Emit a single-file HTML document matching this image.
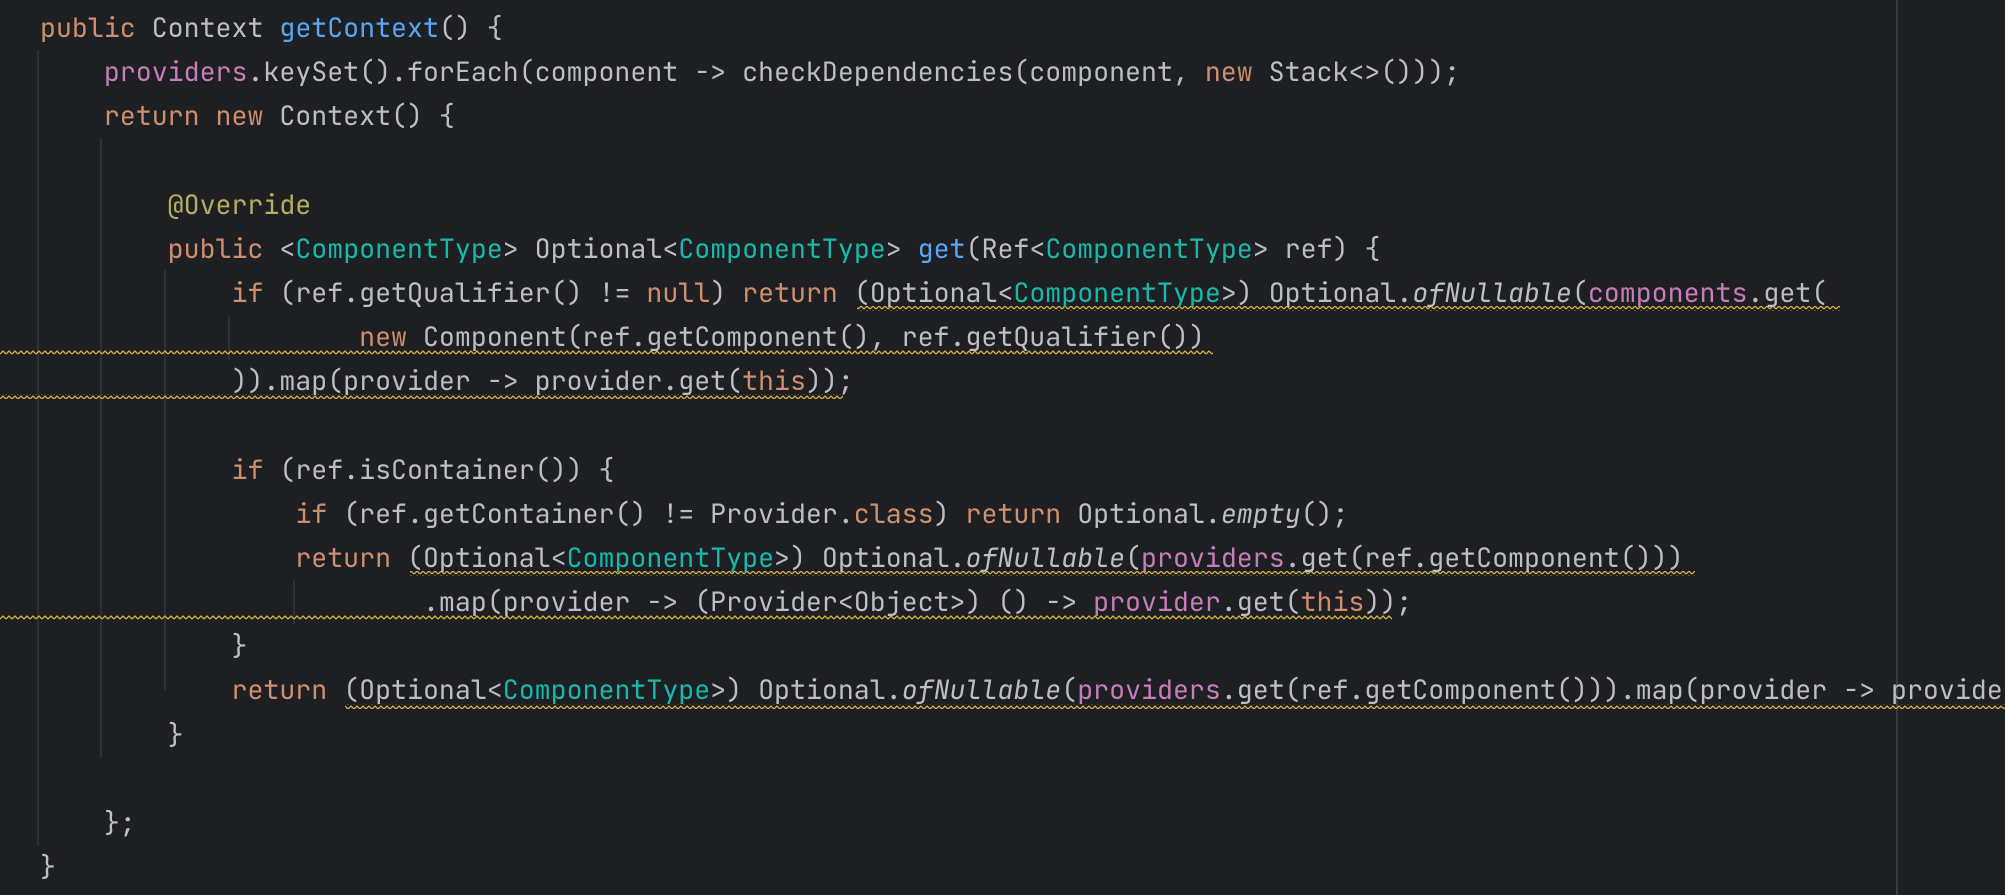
<!DOCTYPE html>
<html><head><meta charset="utf-8">
<style>
html,body{margin:0;padding:0;background:#1e1f22;width:2005px;height:895px;overflow:hidden;}
#code{position:absolute;left:40px;top:6px;width:1965px;overflow:hidden;font-family:"JetBrains Mono","Liberation Mono",monospace;font-size:26.6px;line-height:44.15px;color:#bcbec4;white-space:pre;font-variant-ligatures:none;font-feature-settings:"liga" 0,"calt" 0;}
.k{color:#cf8e6d}.m{color:#56a8f5}.f{color:#c77dbb}.t{color:#16baac}.a{color:#b3ae60}.i{font-style:italic}
.g{position:absolute;width:2px;background:#2e3035;}
</style></head><body>
<div class="g" style="left:37px;top:50px;height:796px"></div>
<div class="g" style="left:100px;top:138px;height:620px"></div>
<div class="g" style="left:164px;top:270px;height:420px"></div>
<div class="g" style="left:228px;top:316px;height:44px"></div>
<div class="g" style="left:293px;top:580px;height:44px"></div>
<div class="g" style="left:1896px;top:0;height:895px;background:#393b40"></div>
<svg width="2005" height="895" style="position:absolute;left:0;top:0">
<defs><pattern id="w" width="6" height="5" patternUnits="userSpaceOnUse"><path d="M0 4 L3 1 L6 4" fill="none" stroke="#d9b341" stroke-width="1.3"/></pattern></defs>
<rect x="857" y="306" width="983" height="5" fill="url(#w)"/>
<rect x="0" y="350" width="1213" height="5" fill="url(#w)"/>
<rect x="0" y="394" width="843" height="5" fill="url(#w)"/>
<rect x="410" y="571" width="1285" height="5" fill="url(#w)"/>
<rect x="0" y="615" width="1392" height="5" fill="url(#w)"/>
<rect x="345" y="704" width="1660" height="5" fill="url(#w)"/>
</svg>
<div id="code"><span class="k">public</span> Context <span class="m">getContext</span>() {
    <span class="f">providers</span>.keySet().forEach(component -&gt; checkDependencies(component, <span class="k">new</span> Stack&lt;&gt;()));
    <span class="k">return new</span> Context() {

        <span class="a">@Override</span>
        <span class="k">public</span> &lt;<span class="t">ComponentType</span>&gt; Optional&lt;<span class="t">ComponentType</span>&gt; <span class="m">get</span>(Ref&lt;<span class="t">ComponentType</span>&gt; ref) {
            <span class="k">if</span> (ref.getQualifier() != <span class="k">null</span>) <span class="k">return</span> (Optional&lt;<span class="t">ComponentType</span>&gt;) Optional.<span class="i">ofNullable</span>(<span class="f">components</span>.get(
                    <span class="k">new</span> Component(ref.getComponent(), ref.getQualifier())
            )).map(provider -&gt; provider.get(<span class="k">this</span>));

            <span class="k">if</span> (ref.isContainer()) {
                <span class="k">if</span> (ref.getContainer() != Provider.<span class="k">class</span>) <span class="k">return</span> Optional.<span class="i">empty</span>();
                <span class="k">return</span> (Optional&lt;<span class="t">ComponentType</span>&gt;) Optional.<span class="i">ofNullable</span>(<span class="f">providers</span>.get(ref.getComponent()))
                        .map(provider -&gt; (Provider&lt;Object&gt;) () -&gt; <span class="f">provider</span>.get(<span class="k">this</span>));
            }
            <span class="k">return</span> (Optional&lt;<span class="t">ComponentType</span>&gt;) Optional.<span class="i">ofNullable</span>(<span class="f">providers</span>.get(ref.getComponent())).map(provider -&gt; provider.get(<span class="k">this</span>));
        }

    };
}</div>
</body></html>
